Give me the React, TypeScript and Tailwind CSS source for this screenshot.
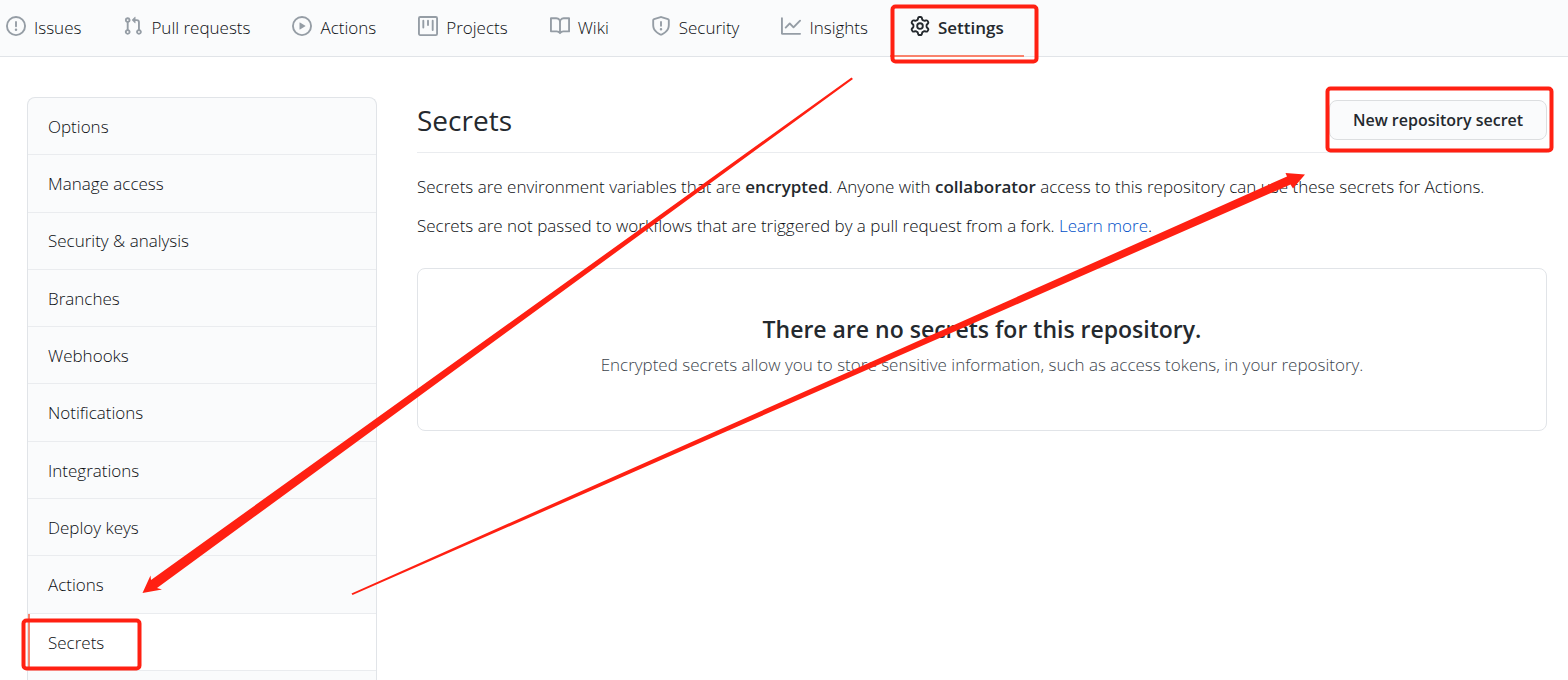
const paths = {
  issue:
    "M8 1.5a6.5 6.5 0 100 13 6.5 6.5 0 000-13zM0 8a8 8 0 1116 0A8 8 0 010 8zm9 3a1 1 0 11-2 0 1 1 0 012 0zm-.25-6.25a.75.75 0 00-1.5 0v3.5a.75.75 0 001.5 0v-3.5z",
  pull: "M7.177 3.073L9.573.677A.25.25 0 0110 .854v4.792a.25.25 0 01-.427.177L7.177 3.427a.25.25 0 010-.354zM3.75 2.5a.75.75 0 100 1.5.75.75 0 000-1.5zm-2.25.75a2.25 2.25 0 113 2.122v5.256a2.251 2.251 0 11-1.5 0V5.372A2.25 2.25 0 011.5 3.25zM11 2.5h-1V4h1a1 1 0 011 1v5.628a2.251 2.251 0 101.5 0V5A2.5 2.5 0 0011 2.5zm1 10.25a.75.75 0 111.5 0 .75.75 0 01-1.5 0zM3.75 12a.75.75 0 100 1.5.75.75 0 000-1.5z",
  play: "M1.5 8a6.5 6.5 0 1113 0 6.5 6.5 0 01-13 0zM8 0a8 8 0 100 16A8 8 0 008 0zM6.379 5.227A.25.25 0 006 5.442v5.117a.25.25 0 00.379.214l4.264-2.559a.25.25 0 000-.428L6.379 5.227z",
  project:
    "M1.75 0A1.75 1.75 0 000 1.75v12.5C0 15.216.784 16 1.75 16h12.5A1.75 1.75 0 0016 14.25V1.75A1.75 1.75 0 0014.25 0H1.75zM1.5 1.75a.25.25 0 01.25-.25h12.5a.25.25 0 01.25.25v12.5a.25.25 0 01-.25.25H1.75a.25.25 0 01-.25-.25V1.75zM11.75 3a.75.75 0 00-.75.75v7.5a.75.75 0 001.5 0v-7.5a.75.75 0 00-.75-.75zm-8.25.75a.75.75 0 011.5 0v5.5a.75.75 0 01-1.5 0v-5.5zM8 3a.75.75 0 00-.75.75v3.5a.75.75 0 001.5 0v-3.5A.75.75 0 008 3z",
  book: "M0 1.75A.75.75 0 01.75 1h4.253c1.227 0 2.317.59 3 1.501A3.744 3.744 0 0111.006 1h4.245a.75.75 0 01.75.75v10.5a.75.75 0 01-.75.75h-4.507a2.25 2.25 0 00-1.591.659l-.622.621a.75.75 0 01-1.06 0l-.622-.621A2.25 2.25 0 005.258 13H.75a.75.75 0 01-.75-.75V1.75zm8.755 3a2.25 2.25 0 012.25-2.25H14.5v9h-3.757c-.71 0-1.4.201-1.992.572l.004-7.322zm-1.504 7.324l.004-5.073-.002-2.253A2.25 2.25 0 005.003 2.5H1.5v9h3.757a3.75 3.75 0 011.994.574z",
  shield:
    "M7.467.133a1.75 1.75 0 011.066 0l5.25 1.68A1.75 1.75 0 0115 3.48V7c0 1.566-.32 3.182-1.303 4.682-.983 1.498-2.585 2.813-5.032 3.855a1.7 1.7 0 01-1.33 0c-2.447-1.042-4.049-2.357-5.032-3.855C1.32 10.182 1 8.566 1 7V3.48a1.75 1.75 0 011.217-1.667l5.25-1.68zm.61 1.429a.25.25 0 00-.153 0l-5.25 1.68a.25.25 0 00-.174.238V7c0 1.358.275 2.666 1.057 3.86.784 1.194 2.121 2.34 4.366 3.297a.2.2 0 00.154 0c2.245-.956 3.582-2.104 4.366-3.298C13.225 9.666 13.5 8.36 13.5 7V3.48a.25.25 0 00-.174-.237l-5.25-1.68zM9 10.5a1 1 0 11-2 0 1 1 0 012 0zm-.25-5.75a.75.75 0 10-1.5 0v3a.75.75 0 001.5 0v-3z",
  graph:
    "M1.5 1.75a.75.75 0 00-1.5 0v12.5c0 .414.336.75.75.75h14.5a.75.75 0 000-1.5H1.5V1.75zm14.28 2.53a.75.75 0 00-1.06-1.06L10 7.94 7.53 5.47a.75.75 0 00-1.06 0L3.22 8.72a.75.75 0 001.06 1.06L7 7.06l2.47 2.47a.75.75 0 001.06 0l5.25-5.25z",
  gear: "M7.429 1.525a6.593 6.593 0 011.142 0c.036.003.108.036.137.146l.289 1.105c.147.56.55.967.997 1.189.174.086.341.183.501.29.417.278.97.423 1.53.27l1.102-.303c.11-.03.175.016.195.046.219.31.41.641.573.989.014.031.022.11-.059.19l-.815.806c-.411.406-.562.957-.53 1.456a4.588 4.588 0 010 .582c-.032.499.119 1.05.53 1.456l.815.806c.08.08.073.159.059.19a6.494 6.494 0 01-.573.99c-.02.029-.086.074-.195.045l-1.103-.303c-.559-.153-1.112-.008-1.529.27-.16.107-.327.204-.5.29-.449.222-.851.628-.998 1.189l-.289 1.105c-.029.11-.101.143-.137.146a6.613 6.613 0 01-1.142 0c-.036-.003-.108-.037-.137-.146l-.289-1.105c-.147-.56-.55-.967-.997-1.189a4.502 4.502 0 01-.501-.29c-.417-.278-.97-.423-1.53-.27l-1.102.303c-.11.03-.175-.016-.195-.046a6.492 6.492 0 01-.573-.989c-.014-.031-.022-.11.059-.19l.815-.806c.411-.406.562-.957.53-1.456a4.587 4.587 0 010-.582c.032-.499-.119-1.05-.53-1.456l-.815-.806c-.08-.08-.073-.159-.059-.19a6.44 6.44 0 01.573-.99c.02-.029.086-.075.195-.045l1.103.303c.559.153 1.112.008 1.529-.27.16-.107.327-.204.5-.29.449-.222.851-.628.998-1.189l.289-1.105c.029-.11.101-.143.137-.146zM8 0c-.236 0-.47.01-.701.03-.743.065-1.29.615-1.458 1.261l-.29 1.106c-.017.066-.078.158-.211.224a5.994 5.994 0 00-.668.386c-.123.082-.233.09-.3.071L3.27 2.776c-.644-.177-1.392.02-1.82.63a7.977 7.977 0 00-.704 1.217c-.315.675-.111 1.422.363 1.891l.815.806c.05.048.098.147.088.294a6.084 6.084 0 000 .772c.01.147-.038.246-.088.294l-.815.806c-.474.469-.678 1.216-.363 1.891.2.428.436.835.704 1.218.428.609 1.176.806 1.82.63l1.103-.303c.066-.019.176-.011.299.071.213.143.436.272.668.386.133.066.194.158.212.224l.289 1.106c.169.646.715 1.196 1.458 1.26a8.094 8.094 0 001.402 0c.743-.064 1.29-.614 1.458-1.26l.29-1.106c.017-.066.078-.158.211-.224a5.98 5.98 0 00.668-.386c.123-.082.233-.09.3-.071l1.102.302c.644.177 1.392-.02 1.82-.63.268-.382.505-.789.704-1.217.315-.675.111-1.422-.364-1.891l-.814-.806c-.05-.048-.098-.147-.088-.294a6.1 6.1 0 000-.772c-.01-.147.039-.246.088-.294l.814-.806c.475-.469.679-1.216.364-1.891a7.992 7.992 0 00-.704-1.218c-.428-.609-1.176-.806-1.82-.63l-1.103.303c-.066.019-.176.011-.299-.071a5.991 5.991 0 00-.668-.386c-.133-.066-.194-.158-.212-.224L10.16 1.29C9.99.645 9.444.095 8.701.031A8.094 8.094 0 008 0zm1.5 8a1.5 1.5 0 11-3 0 1.5 1.5 0 013 0zM11 8a3 3 0 11-6 0 3 3 0 016 0z",
};

const tabs: { label: string; icon: string; current?: boolean }[] = [
  { label: "Issues", icon: paths.issue },
  { label: "Pull requests", icon: paths.pull },
  { label: "Actions", icon: paths.play },
  { label: "Projects", icon: paths.project },
  { label: "Wiki", icon: paths.book },
  { label: "Security", icon: paths.shield },
  { label: "Insights", icon: paths.graph },
  { label: "Settings", icon: paths.gear, current: true },
];

const menu = [
  "Options",
  "Manage access",
  "Security & analysis",
  "Branches",
  "Webhooks",
  "Notifications",
  "Integrations",
  "Deploy keys",
  "Actions",
  "Secrets",
];

function Tabs() {
  return (
    <nav aria-label="Repository" className="flex h-[57px] shrink-0 border-b border-[#e1e4e8] bg-[#fafbfc]">
      <ul className="-ml-[14px] flex gap-0.5">
        {tabs.map((tab) => (
          <li key={tab.label} className="flex">
            <a
              href="#"
              aria-current={tab.current ? "page" : undefined}
              className={
                tab.current
                  ? "-mb-px flex items-start gap-2 border-b-2 border-[#f9826c] px-5 font-semibold text-[#24292e]"
                  : "flex items-start gap-2 px-5"
              }
            >
              <svg
                viewBox="0 0 16 16"
                className={
                  tab.current ? "mt-4 size-5 shrink-0 fill-[#24292e]" : "mt-4 size-5 shrink-0 fill-[#959da5]"
                }
                aria-hidden="true"
              >
                <path fillRule="evenodd" d={tab.icon} />
              </svg>
              <span className="pt-[15px] leading-[26px]">{tab.label}</span>
            </a>
          </li>
        ))}
      </ul>
    </nav>
  );
}

function SideMenu() {
  return (
    <nav
      aria-label="Settings"
      className="w-[350px] shrink-0 overflow-hidden rounded-t-lg border border-b-0 border-[#e1e4e8] bg-[#fafbfc]"
    >
      <ul className="grid h-[573px] auto-rows-fr">
        {menu.map((label) => (
          <li key={label} className="grid border-b border-[#eaecef]">
            <a
              href="#"
              aria-current={label === "Secrets" ? "page" : undefined}
              className={
                label === "Secrets"
                  ? "flex items-center border-l-2 border-[#f9826c] bg-white pt-px pl-[18px]"
                  : "flex items-center pt-px pl-5"
              }
            >
              {label}
            </a>
          </li>
        ))}
      </ul>
    </nav>
  );
}

function Annotations() {
  return (
    <svg
      className="pointer-events-none absolute top-0 left-0 h-[680px] w-[1568px] fill-[#ff2012]"
      viewBox="0 0 1568 680"
      aria-hidden="true"
    >
      <g fill="none" stroke="#ff2012" strokeWidth="4">
        <rect x="892.5" y="6.5" width="144" height="55" rx="3" />
        <rect x="1327.5" y="88.5" width="224" height="62" rx="3" />
        <rect x="23.5" y="620.5" width="116" height="48" rx="3" />
      </g>
      <path d="M851.5 77.5L853 79L157 588L162 589.5L142.5 593L150.5 575.5L151 580Z" />
      <path d="M351.5 593.5L1287 176.5L1285.5 173L1305 174.5L1293 188.5L1290.5 184.5L352.5 595Z" />
    </svg>
  );
}

export default function App() {
  return (
    <div className="relative flex min-h-screen flex-col overflow-hidden bg-white font-['Open_Sans','Noto_Sans',sans-serif] text-[17px] font-light text-[#0b0e12]">
      <Tabs />
      <div className="flex grow gap-10 pt-10 pr-[21px] pl-[27px]">
        <SideMenu />
        <main className="min-w-0 grow">
          <div className="flex h-14 items-start justify-between border-b border-[#eaecef]">
            <h1 className="pt-[3px] text-[28px] leading-10 font-normal text-[#24292e]">Secrets</h1>
            <button
              type="button"
              className="mt-[3px] h-10 min-w-[218px] rounded-lg border border-[#dcdee0] bg-[#fafbfc] px-5 text-base font-semibold text-[#24292e]"
            >
              New repository secret
            </button>
          </div>
          <p className="mt-[21px] leading-[26px]">
            Secrets are environment variables that are{" "}
            <strong className="font-semibold text-[#24292e]">encrypted</strong>. Anyone with{" "}
            <strong className="font-semibold text-[#24292e]">collaborator</strong> access to this repository can use
            these secrets for Actions.
          </p>
          <p className="mt-[13px] leading-[26px]">
            Secrets are not passed to workflows that are triggered by a pull request from a fork.{" "}
            <a href="#" className="text-[#0050c8]">
              Learn more
            </a>
            .
          </p>
          <section className="mt-[29px] flex h-[163px] flex-col items-center rounded-lg border border-[#e1e4e8] pt-10">
            <h2 className="text-[23px] leading-10 font-semibold text-[#24292e]">
              There are no secrets for this repository.
            </h2>
            <p className="mt-[3px] leading-[26px] text-[#3c444c]">
              Encrypted secrets allow you to store sensitive information, such as access tokens, in your repository.
            </p>
          </section>
        </main>
      </div>
      <Annotations />
    </div>
  );
}
